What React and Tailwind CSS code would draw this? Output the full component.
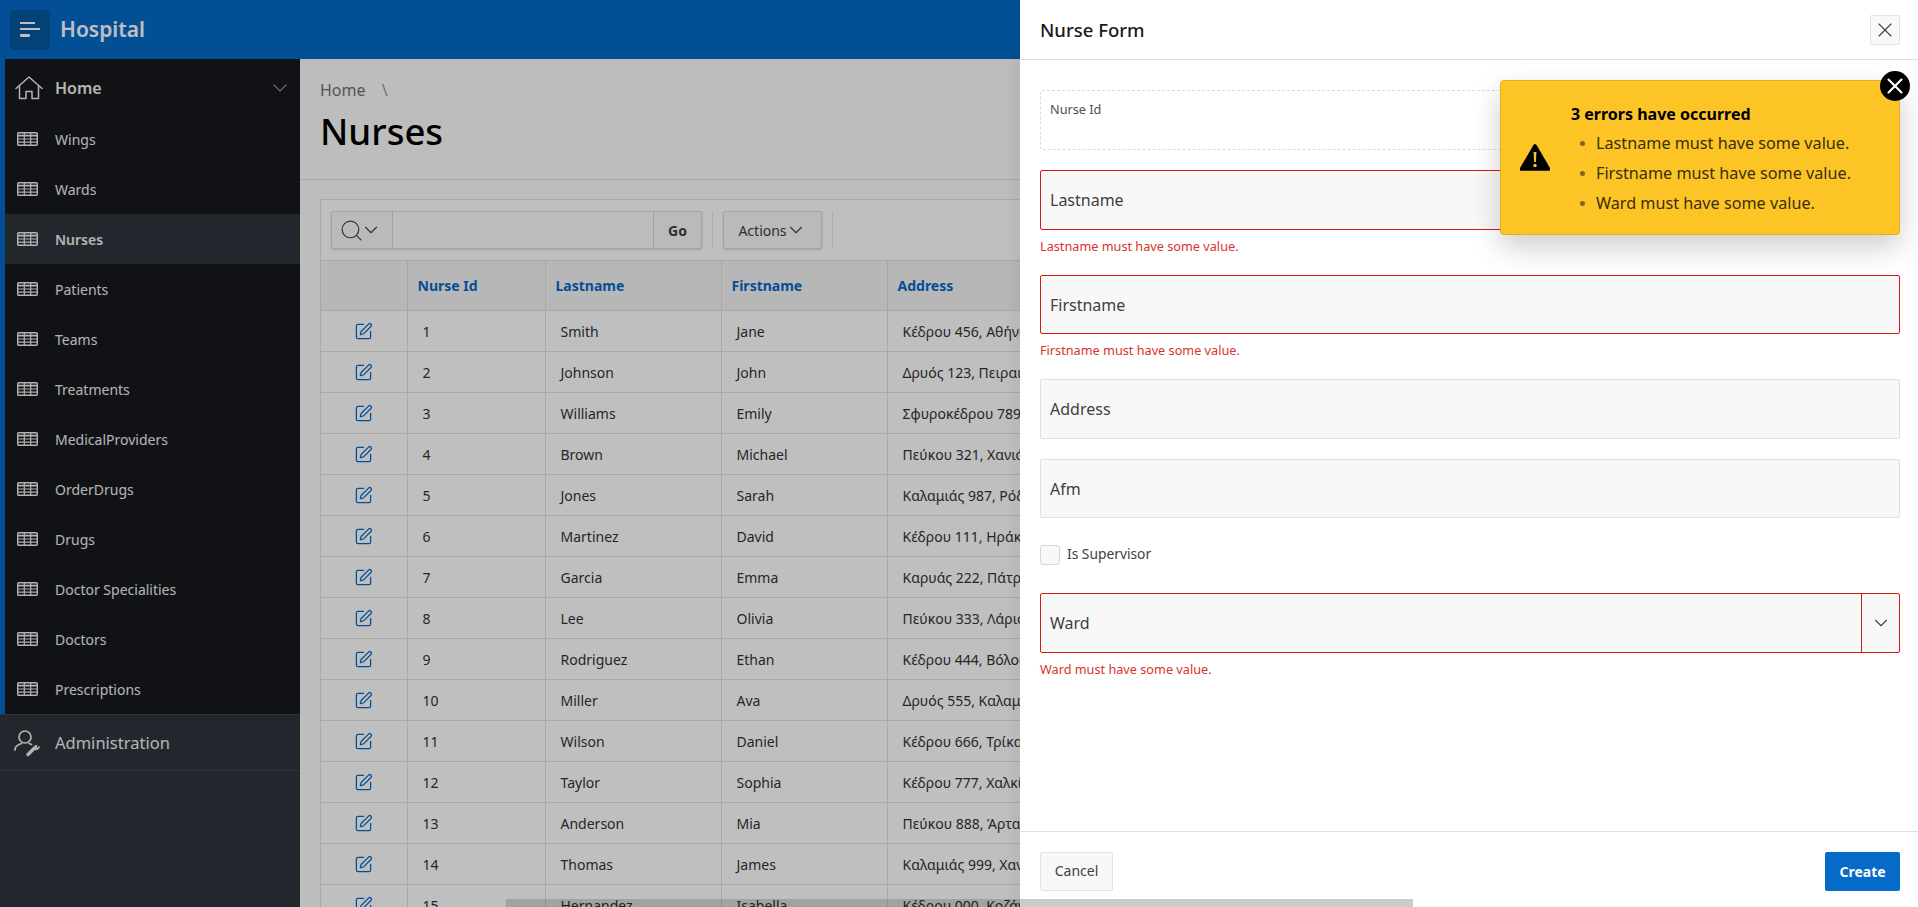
import React from 'react';
import { X, ChevronDown, Search, SquarePen } from 'lucide-react';

const menuItems = ['Wings', 'Wards', 'Nurses', 'Patients', 'Teams', 'Treatments', 'MedicalProviders', 'OrderDrugs', 'Drugs', 'Doctor Specialities', 'Doctors', 'Prescriptions'];

const nurses = [
  [1, 'Smith', 'Jane', 'Κέδρου 456, Αθήνα'],
  [2, 'Johnson', 'John', 'Δρυός 123, Πειραιάς'],
  [3, 'Williams', 'Emily', 'Σφυροκέδρου 789, Βόλος'],
  [4, 'Brown', 'Michael', 'Πεύκου 321, Χανιά'],
  [5, 'Jones', 'Sarah', 'Καλαμιάς 987, Ρόδος'],
  [6, 'Martinez', 'David', 'Κέδρου 111, Ηράκλειο'],
  [7, 'Garcia', 'Emma', 'Καρυάς 222, Πάτρα'],
  [8, 'Lee', 'Olivia', 'Πεύκου 333, Λάρισα'],
  [9, 'Rodriguez', 'Ethan', 'Κέδρου 444, Βόλος'],
  [10, 'Miller', 'Ava', 'Δρυός 555, Καλαμάτα'],
  [11, 'Wilson', 'Daniel', 'Κέδρου 666, Τρίκαλα'],
  [12, 'Taylor', 'Sophia', 'Κέδρου 777, Χαλκίδα'],
  [13, 'Anderson', 'Mia', 'Πεύκου 888, Άρτα'],
  [14, 'Thomas', 'James', 'Καλαμιάς 999, Χανιά'],
  [15, 'Hernandez', 'Isabella', 'Κέδρου 000, Κοζάνη'],
];

const errors = ['Lastname must have some value.', 'Firstname must have some value.', 'Ward must have some value.'];

const TableIcon = () => (
  <svg width="21" height="14" viewBox="0 0 21 14" fill="none" stroke="currentColor" strokeWidth="1.4">
    <rect x="0.7" y="0.7" width="19.6" height="12.6" rx="1" />
    <path d="M0.7 3.6h19.6" strokeWidth="1.8" />
    <path d="M0.7 7h19.600M0.7 10.200h19.600M7.300 0.700v12.600M13.700 0.700v12.600" strokeWidth="1.2" />
  </svg>
);

const HomeIcon = () => (
  <svg width="28" height="24" viewBox="0 0 28 24" fill="none" stroke="currentColor" strokeWidth="1.5" strokeLinejoin="round" strokeLinecap="round">
    <path d="M1 12.5 14 1l13 11.5" />
    <path d="M4.5 10.5V22.5h6.5v-7h6v7h6.5V10.5" />
  </svg>
);

const AdminIcon = () => (
  <svg width="28" height="28" viewBox="0 0 28 28" fill="none" stroke="currentColor" strokeWidth="1.7" strokeLinecap="round">
    <circle cx="11" cy="8" r="6" />
    <path d="M1 21c0-3 3-5.500 6.500-6.500M15 14.500c1 .3 1.800.6 2.500 1" />
    <path d="M14 25.500l6-6" strokeWidth="3.400" />
    <path d="M20 20c-1-2 1-4 3-3.500l-1 1.800 1.500 1 1.500-2c.7 2.500-2 4.800-5 2.700z" fill="currentColor" strokeWidth="1" />
  </svg>
);

const WarningIcon = () => (
  <svg width="30" height="28" viewBox="0 0 30 28">
    <path d="M15 2 L28.500 25 H1.500 Z" fill="#000" stroke="#000" strokeWidth="3.600" strokeLinejoin="round" />
    <path d="M13.600 8h2.800l-.5 10h-1.800z" fill="#fdc426" />
    <circle cx="15" cy="21.500" r="1.700" fill="#fdc426" />
  </svg>
);

const Field = ({ label, error, select }) => (
  <div className="mb-5">
    <div className={`flex h-[59.5px] items-center rounded-[2px] border bg-[#f8f8f8] text-[16px] text-[#404040] ${error ? 'border-[#d31a0f]' : 'border-[#e0e0e0]'}`}>
      <span className="flex-1 pl-[9px] pt-[1px]">{label}</span>
      {select && (
        <span className="flex h-full w-[38px] items-center justify-center border-l border-[#b5261c]">
          <ChevronDown size={22} strokeWidth={1.2} className="text-[#404040]" />
        </span>
      )}
    </div>
    {error && <p className="mt-[7px] h-[18px] text-[12.7px] leading-[18px] text-[#d9342b]">{label} must have some value.</p>}
  </div>
);

export default function App() {
  return (
    <div className="relative flex h-[907px] w-[1918px] flex-col overflow-hidden bg-white text-[14px] text-[#262626] [font-family:'Noto_Sans',sans-serif]">
      <header className="flex h-[59px] shrink-0 items-center bg-[#056ac8] pl-[10px] text-white">
        <button className="flex h-10 w-10 flex-col justify-center gap-[4px] rounded-[3px] bg-[#04599f] pl-[10px]">
          <span className="h-[2px] w-[15px] bg-white" />
          <span className="h-[2px] w-5 bg-white" />
          <span className="h-[3px] w-[10px] rounded-[1px] bg-white" />
        </button>
        <span className="ml-[10px] pt-[1px] text-[21px] font-semibold">Hospital</span>
      </header>

      <div className="flex min-h-0 flex-1">
        <aside className="w-[300px] shrink-0 bg-[#2d353b] text-[#f0f0f0]">
          <div className="border-l-[5px] border-[#056ac8] bg-[#16191e]">
            <div className="flex h-[55px] items-center pl-[10px] pr-[8px] pt-[2px] font-semibold text-[16px]">
              <span className="w-[40px]"><HomeIcon /></span>
              <span className="flex-1">Home</span>
              <ChevronDown size={24} strokeWidth={1.3} className="text-[#8a8a8a]" />
            </div>
            {menuItems.map((item) => (
              <div key={item} className={`flex h-[50px] items-center pl-3 text-[14px] ${item === 'Nurses' ? 'bg-[#2d353b] font-semibold' : ''}`}>
                <span className="w-[38px]"><TableIcon /></span>
                {item}
              </div>
            ))}
          </div>
          <div className="flex h-[57px] items-center border-y border-[#3d454b] pl-[14px] pt-[1px] text-[16.5px]">
            <span className="w-[41px]"><AdminIcon /></span>
            Administration
          </div>
        </aside>

        <main className="min-w-0 flex-1 bg-[#fdfdfd]">
          <div className="h-[121px] border-b border-[#e0e0e0] pl-5 pt-[19px]">
            <div className="text-[16px] leading-6 text-[#707070]">Home <span className="ml-3 text-[#9a9a9a]">\</span></div>
            <h1 className="mt-[4px] text-[36.5px] font-medium leading-[50px] text-black">Nurses</h1>
          </div>
          <div className="pl-5 pr-5 pt-[19px]">
            <div className="border border-[#e2e2e2] bg-white">
              <div className="flex h-[60px] items-center pl-[10px]">
                <div className="flex h-[38px] w-[371px] rounded-[2px] border border-[#d8d8d8] bg-[#f8f8f8] shadow-sm">
                  <span className="flex w-[61px] items-center border-r border-[#d8d8d8] pl-[7px] text-[#404040]">
                    <Search size={25} strokeWidth={1.1} />
                    <ChevronDown size={22} strokeWidth={1.2} className="-ml-[4px] shrink-0" />
                  </span>
                  <span className="flex-1 bg-[#fcfcfc]" />
                  <span className="flex w-[48px] items-center justify-center border-l border-[#d8d8d8] font-bold text-[#404040]">Go</span>
                </div>
                <span className="mx-[10px] h-[38px] w-px bg-[#e6e6e6]" />
                <div className="flex h-[38px] w-[99px] items-center justify-center rounded-[2px] border border-[#d8d8d8] bg-[#f8f8f8] text-[#404040] shadow-sm">
                  Actions
                  <ChevronDown size={22} strokeWidth={1.2} className="-ml-[2px]" />
                </div>
                <span className="mx-[10px] h-[38px] w-px bg-[#e6e6e6]" />
              </div>
              <table className="w-[1556px] table-fixed border-collapse">
                <colgroup>
                  <col className="w-[86px]" />
                  <col className="w-[138px]" />
                  <col className="w-[176px]" />
                  <col className="w-[166px]" />
                  <col />
                </colgroup>
                <thead>
                  <tr className="h-[50px] border-y border-[#e0e0e0] bg-[#f5f5f5] text-left font-bold text-[#056ac8]">
                    <th />
                    <th className="border-l border-[#e0e0e0] pl-[10px]">Nurse Id</th>
                    <th className="border-l border-[#e0e0e0] pl-[10px]">Lastname</th>
                    <th className="border-l border-[#e0e0e0] pl-[10px]">Firstname</th>
                    <th className="border-l border-[#e0e0e0] pl-[10px]">Address</th>
                  </tr>
                </thead>
                <tbody className="text-[#333333]">
                  {nurses.map(([id, last, first, address]) => (
                    <tr key={id} className="h-[41px] border-b border-[#e0e0e0]">
                      <td>
                        <SquarePen size={19} strokeWidth={1.6} className="mx-auto text-[#056ac8]" />
                      </td>
                      <td className="border-l border-[#e0e0e0] pl-[15px]">{id}</td>
                      <td className="border-l border-[#e0e0e0] pl-[15px]">{last}</td>
                      <td className="border-l border-[#e0e0e0] pl-[15px]">{first}</td>
                      <td className="border-l border-[#e0e0e0] pl-[15px]">{address}</td>
                    </tr>
                  ))}
                </tbody>
              </table>
            </div>
          </div>
        </main>
      </div>

      <div className="absolute inset-0 bg-black/25" />
      <div className="absolute bottom-0 left-[506px] h-2 w-[514px] bg-black/15" />

      <section className="absolute bottom-0 right-0 top-0 flex w-[898px] flex-col bg-white shadow-[-6px_0_12px_rgba(0,0,0,0.05)]">
        <div className="flex h-[60px] shrink-0 items-center justify-between border-b border-[#e0e0e0] pl-5 pr-[18px]">
          <h2 className="pt-[1px] text-[18.5px] font-medium text-[#1a1a1a]">Nurse Form</h2>
          <button className="flex h-[30px] w-[30px] items-center justify-center rounded-[2px] border border-[#e3e3e3] bg-[#f8f8f8] text-[#404040]">
            <X size={24} strokeWidth={1.1} />
          </button>
        </div>

        <div className="flex-1 pl-5 pr-[18px] pt-[30px]">
          <div className="mb-5 h-[60px] rounded-[2px] border border-dashed border-[#dcdcdc] pl-[9px] pt-[9px] text-[12.7px] leading-[18px] text-[#505050]">Nurse Id</div>
          <Field label="Lastname" error />
          <Field label="Firstname" error />
          <Field label="Address" />
          <Field label="Afm" />
          <label className="mb-[28px] mt-[27px] flex h-5 items-center gap-[7px] pb-[2px] text-[13.8px] text-[#404040]">
            <span className="mt-[2px] h-5 w-5 rounded-[3px] border border-[#d8d8d8] bg-[#f8f8f8]" />
            Is Supervisor
          </label>
          <Field label="Ward" error select />
        </div>

        <div className="flex h-[76px] shrink-0 items-start justify-between border-t border-[#e0e0e0] pl-5 pr-[18px] pt-5">
          <button className="h-[39px] w-[73px] rounded-[2px] border border-[#e3e3e3] bg-[#f8f8f8] pb-[2px] text-[14px] text-[#404040]">Cancel</button>
          <button className="h-[39px] w-[75px] rounded-[2px] bg-[#056ac8] pb-[1px] text-[14px] font-bold text-white">Create</button>
        </div>

        <div className="absolute bottom-0 left-0 h-2 w-[393px] bg-black/20" />

        <div className="absolute right-[18px] top-[80px] flex h-[155px] w-[400px] items-center rounded-[4px] border border-[#e6ae1e] bg-[#fdc426] shadow-[0_12px_30px_rgba(0,0,0,0.2)]">
          <span className="ml-[19px] w-[51px]"><WarningIcon /></span>
          <div className="pt-[5px]">
            <div className="text-[16px] font-bold leading-[24px] text-black">3 errors have occurred</div>
            <ul className="mt-[3px]">
              {errors.map((err) => (
                <li key={err} className="flex h-[30px] items-center text-[16.2px] text-[#3a2f0b]">
                  <span className="ml-[9px] mr-[11px] h-[5px] w-[5px] rounded-full bg-[#80651a]" />
                  {err}
                </li>
              ))}
            </ul>
          </div>
          <button className="absolute -right-[11px] -top-[10px] flex h-[30px] w-[30px] items-center justify-center rounded-full bg-black text-white">
            <X size={26} strokeWidth={1.9} />
          </button>
        </div>
      </section>
    </div>
  );
}
